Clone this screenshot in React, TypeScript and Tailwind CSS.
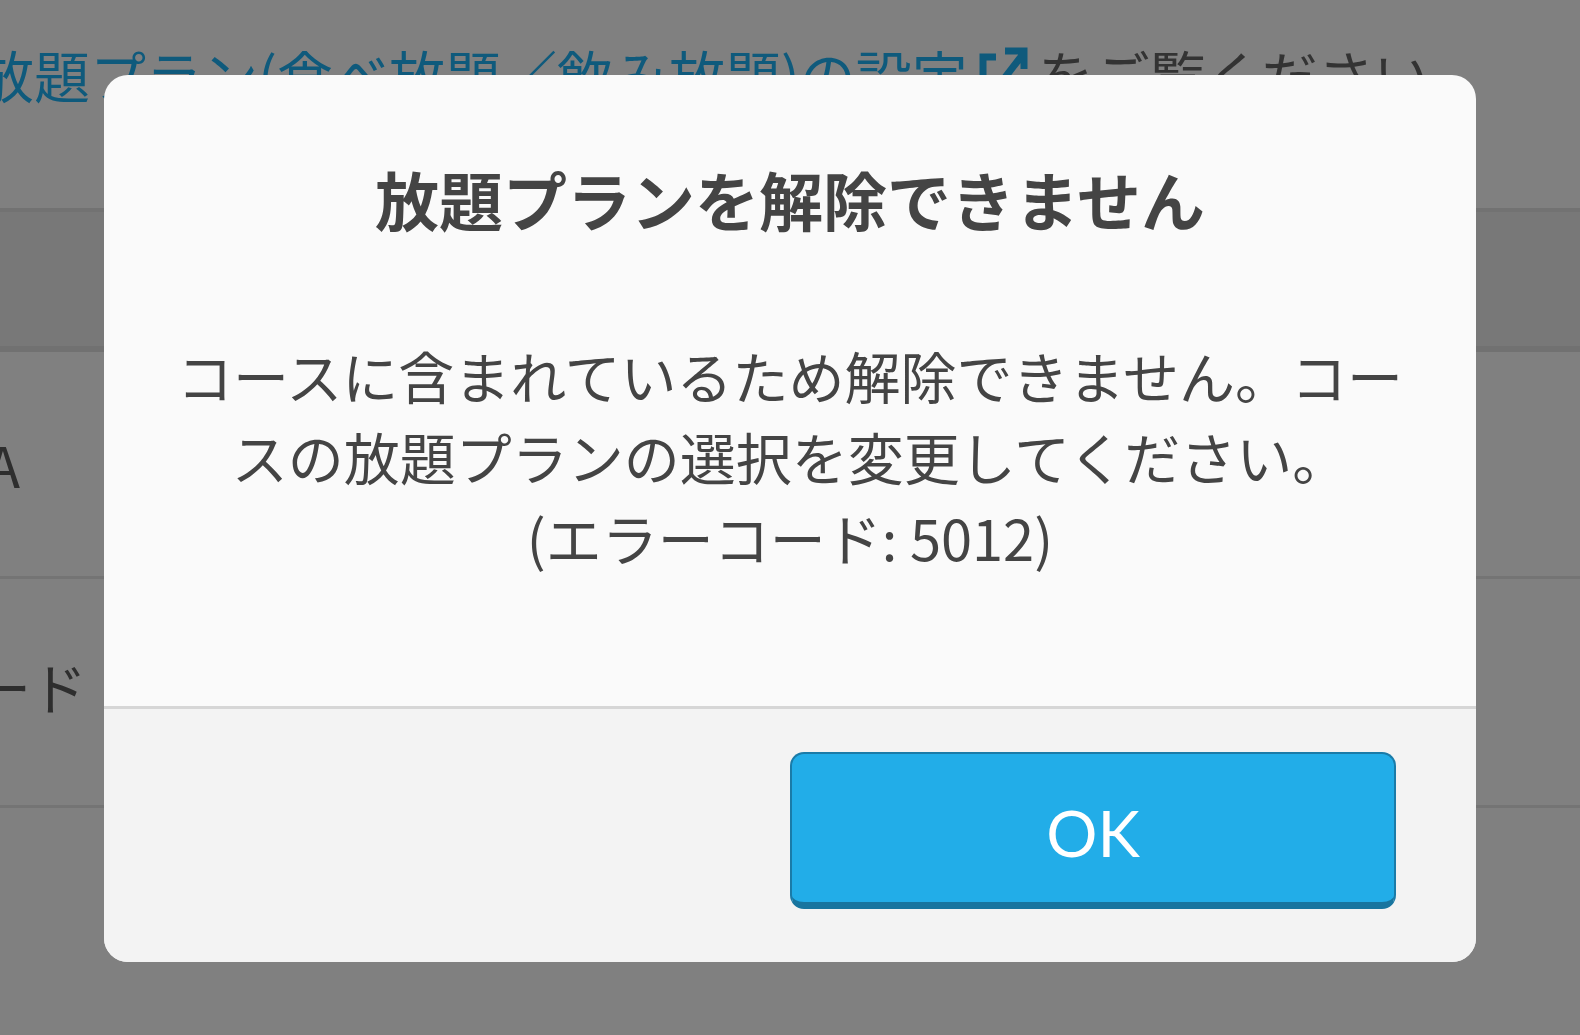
const font = { fontFamily: '"Noto Sans CJK JP", sans-serif' }

function Dialog() {
  return (
    <div className="fixed left-[104px] top-[75px] flex h-[887px] w-[1372px] flex-col overflow-hidden rounded-[24px] bg-[#fafafa] text-[#444444]">
      <div className="flex flex-1 flex-col items-center">
        <h2 className="mt-[85px] text-[64px] font-bold leading-[76px]">放題プランを解除できません</h2>
        <p className="mt-[98px] w-[1240px] text-center text-[56px] leading-[81px]">
          コースに含まれているため解除できません。コースの放題プランの選択を変更してください。
          <br />
          (エラーコード: 5012)
        </p>
      </div>
      <div className="flex h-[256px] justify-end border-t-[3px] border-[#d6d6d6] bg-[#f3f3f3] pr-[80px] pt-[43px]">
        <button className="h-[157px] w-[606px] rounded-[14px] border-2 border-b-[7px] border-[#1a7ba8] border-b-[#18759f] bg-[#22ade8] pt-[9px] text-[64px] text-white" style={{ fontFamily: 'Lato, sans-serif' }}>
          OK
        </button>
      </div>
    </div>
  )
}

export default function App() {
  return (
    <div className="h-[1035px] w-[1580px] overflow-hidden bg-[#808080]" style={font}>
      <div className="h-[212px] border-b-[4px] border-[#727272] pt-[38px]">
        <div className="ml-[-22px] flex items-center whitespace-nowrap text-[56px] leading-[72px] text-[#0f5a7c]">
          放題プラン(食べ放題／飲み放題)の設定
          <svg width="50" height="50" viewBox="0 0 50 50" fill="none" stroke="#0f5a7c" strokeWidth="7" className="ml-[11px] mr-[9px] mt-[-6px] shrink-0">
            <path d="M4 50V11h13" />
            <path d="M21 38 44 8M26 5h19v18" />
          </svg>
          <span className="text-[#333333]">をご覧ください</span>
        </div>
      </div>
      <div className="h-[140px] border-b-[6px] border-[#717171] bg-[#787878]" />
      <div className="flex h-[227px] items-center border-b-[3px] border-[#747474] text-[56px] text-[#2e2e2e]">
        <span className="ml-[-14px]">A</span>
      </div>
      <div className="flex h-[229px] items-center border-b-[3px] border-[#747474] pb-[12px] text-[56px] text-[#2e2e2e]">
        <span className="ml-[-25px]">ード</span>
      </div>
      <Dialog />
    </div>
  )
}
